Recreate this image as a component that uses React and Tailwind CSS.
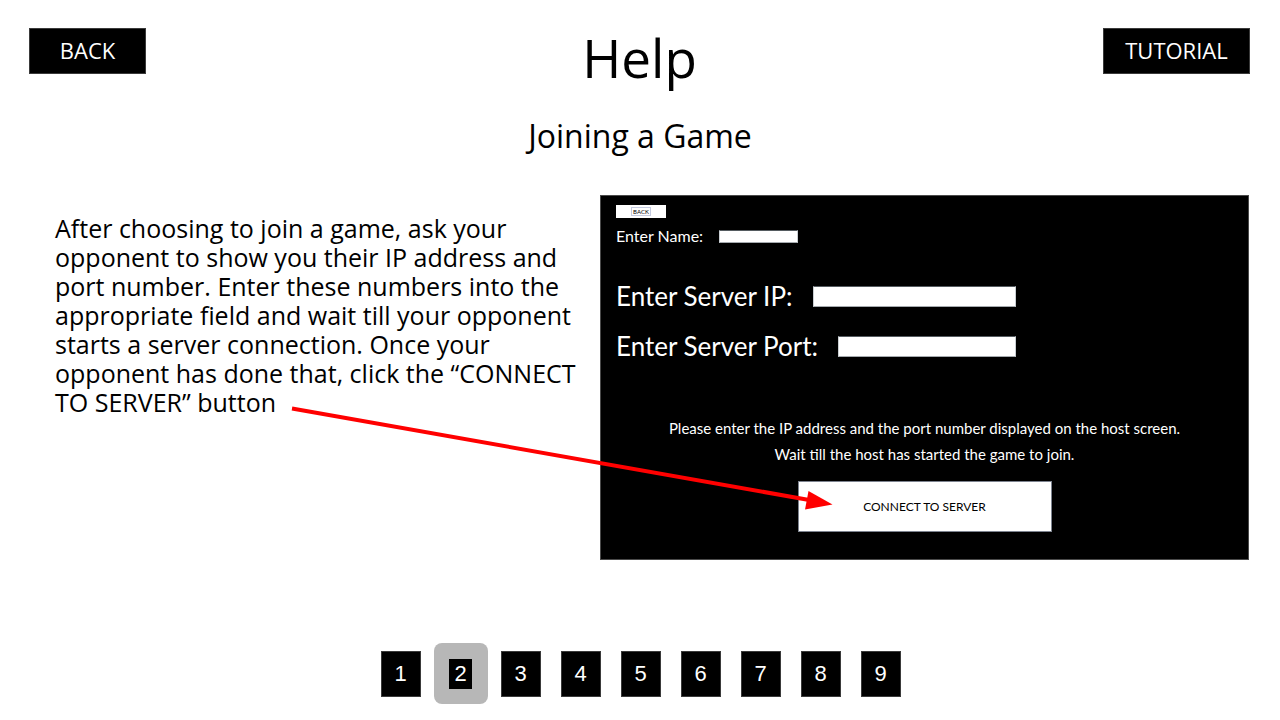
const pages = [1, 2, 3, 4, 5, 6, 7, 8, 9];

function NavButton({ children, className }) {
  return (
    <button
      type="button"
      className={`h-[46px] border border-[#3a3a3a] bg-black text-[22px] text-white ${className}`}
    >
      {children}
    </button>
  );
}

function Field({ id, label, rowClass, labelClass, inputClass }) {
  return (
    <div className={`flex items-center ${rowClass}`}>
      <label htmlFor={id} className={`shrink-0 whitespace-nowrap ${labelClass}`}>
        {label}
      </label>
      <input
        id={id}
        type="text"
        className={`min-w-0 flex-1 border border-t-[#555b60] border-r-[#c9ced2] border-b-[#a5aaae] border-l-[#c9ced2] bg-white px-1 text-xs text-black ${inputClass}`}
      />
    </div>
  );
}

function Arrow() {
  return (
    <svg
      aria-hidden="true"
      className="pointer-events-none absolute top-[205px] -left-[310px] h-[120px] w-[550px]"
      viewBox="290 400 550 120"
    >
      <path d="M292 408.5L812 500.5" stroke="#ff0000" strokeWidth="4" fill="none" />
      <path d="M832.5 504.5L808.5 491L805 509.5Z" fill="#ff0000" />
    </svg>
  );
}

function ServerPanel() {
  return (
    <div className="relative min-w-0 flex-1">
      <div className="border border-[#4a4a4a] bg-black px-[15px] pt-[9px] pb-[27px] font-['Lato',sans-serif] text-white">
        <button
          type="button"
          className="flex h-[13px] w-[50px] items-center justify-center bg-white text-[6px] leading-[7px] text-black"
        >
          <span className="border border-[#c5cbe0] px-px">BACK</span>
        </button>
        <Field
          id="name"
          label="Enter Name:"
          rowClass="mt-2 h-5 w-[182px]"
          labelClass="w-[103px] text-base"
          inputClass="h-[13px]"
        />
        <Field
          id="server-ip"
          label="Enter Server IP:"
          rowClass="mt-8 h-9 w-[400px]"
          labelClass="w-[197px] text-[26px]"
          inputClass="h-[21px]"
        />
        <Field
          id="server-port"
          label="Enter Server Port:"
          rowClass="mt-[14px] h-9 w-[400px]"
          labelClass="w-[222px] text-[26px]"
          inputClass="h-[21px]"
        />
        <p className="mt-[51px] text-center text-[15px] leading-[26px]">
          Please enter the IP address and the port number displayed on the host screen.
          <br />
          Wait till the host has started the game to join.
        </p>
        <button
          type="button"
          className="mx-auto mt-[14px] block h-[51px] w-[254px] border border-[#7d838f] bg-white text-xs text-black"
        >
          CONNECT TO SERVER
        </button>
      </div>
      <Arrow />
    </div>
  );
}

export default function App() {
  return (
    <div className="flex min-h-screen flex-col bg-white font-['Open_Sans',sans-serif] text-black">
      <header className="grid grid-cols-[1fr_auto_1fr] items-start pt-7 pr-[30px] pl-[29px]">
        <NavButton className="w-[117px] pb-[2px]">BACK</NavButton>
        <h1 className="text-[53px] leading-[60px]">Help</h1>
        <NavButton className="w-[147px] justify-self-end pb-[2px]">TUTORIAL</NavButton>
      </header>
      <main className="flex flex-1 flex-col">
        <h2 className="mt-[28px] text-center text-[32px] leading-10">Joining a Game</h2>
        <section className="mt-[39px] flex items-start pr-[31px] pl-[55px]">
          <p className="mt-[19px] w-[545px] shrink-0 pr-5 text-[25px] leading-[29px]">
            After choosing to join a game, ask your opponent to show you their IP address and port
            number. Enter these numbers into the appropriate field and wait till your opponent
            starts a server connection. Once your opponent has done that, click the “CONNECT TO
            SERVER” button
          </p>
          <ServerPanel />
        </section>
      </main>
      <nav
        aria-label="Help pages"
        className="mb-4 flex h-[61px] items-center justify-center gap-5 pl-px font-['Liberation_Sans',sans-serif]"
      >
        {pages.map((page) =>
          page === 2 ? (
            <div key={page} className="flex w-10 justify-center">
              <button
                type="button"
                aria-current="page"
                className="flex h-[61px] w-[54px] shrink-0 items-center justify-center rounded-lg bg-[#b7b7b7] text-[22px] text-white"
              >
                <span className="flex h-[30px] w-[23px] items-center justify-center bg-black">
                  {page}
                </span>
              </button>
            </div>
          ) : (
            <NavButton key={page} className="w-10">
              {page}
            </NavButton>
          )
        )}
      </nav>
    </div>
  );
}
